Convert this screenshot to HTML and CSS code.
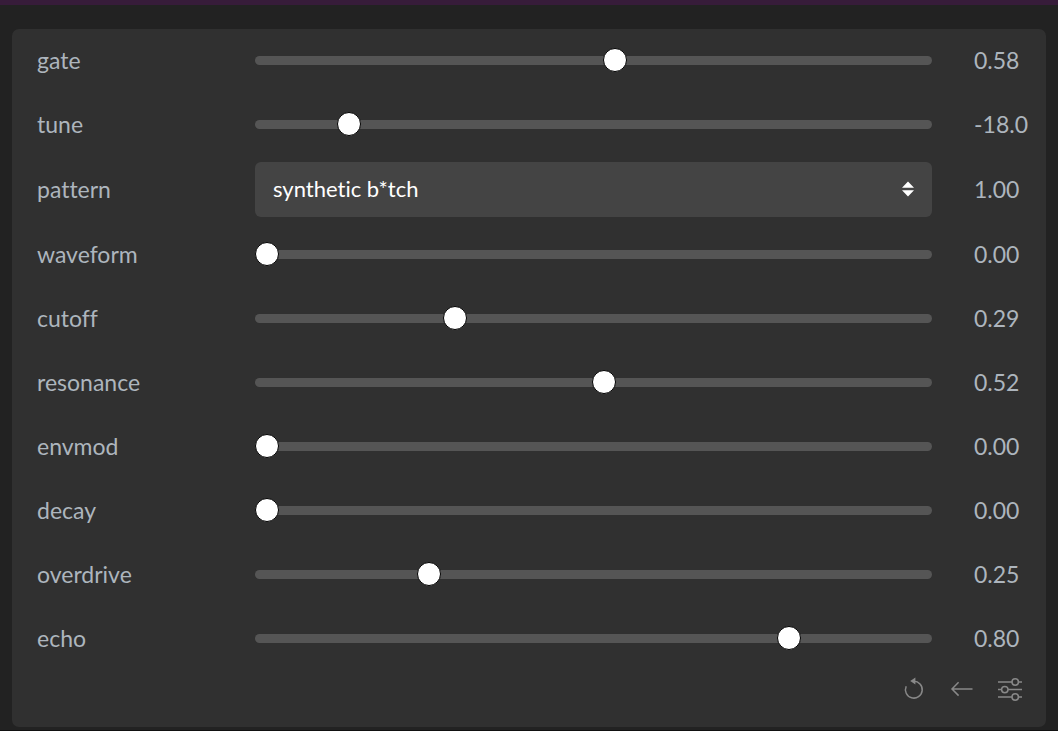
FILE: index.html
```html
<!DOCTYPE html>
<html lang="en">
<head>
  <meta charset="UTF-8"/><meta name="viewport" content="width=device-width, initial-scale=1.0"/>
  <title>synth</title>
  <link rel="stylesheet" href="styles.css">
</head>
<body>
  <main>
    <form class="panel">
      <div class="row">
        <label for="gate">gate</label>
        <input type="range" id="gate" min="0.1" max="1" step="0.01" value="0.58"/>
        <output for="gate">0.58</output>
      </div>
      <div class="row">
        <label for="tune">tune</label>
        <input type="range" id="tune" min="-24" max="24" step="0.1" value="-18"/>
        <output for="tune">-18.0</output>
      </div>
      <div class="row row-select">
        <label for="pattern">pattern</label>
        <div class="select-wrap">
          <select id="pattern">
            <option selected>synthetic b*tch</option>
          </select>
          <svg class="caret" viewBox="0 0 12 16" aria-hidden="true"><path d="M6 0.5 12 6.8H0zM6 15.5 12 9.2H0z"/></svg>
        </div>
        <output for="pattern">1.00</output>
      </div>
      <div class="row">
        <label for="waveform">waveform</label>
        <input type="range" id="waveform" min="0" max="1" step="0.01" value="0"/>
        <output for="waveform">0.00</output>
      </div>
      <div class="row">
        <label for="cutoff">cutoff</label>
        <input type="range" id="cutoff" min="0" max="1" step="0.001" value="0.288"/>
        <output for="cutoff">0.29</output>
      </div>
      <div class="row">
        <label for="resonance">resonance</label>
        <input type="range" id="resonance" min="0" max="1" step="0.001" value="0.516"/>
        <output for="resonance">0.52</output>
      </div>
      <div class="row">
        <label for="envmod">envmod</label>
        <input type="range" id="envmod" min="0" max="1" step="0.01" value="0"/>
        <output for="envmod">0.00</output>
      </div>
      <div class="row">
        <label for="decay">decay</label>
        <input type="range" id="decay" min="0" max="1" step="0.01" value="0"/>
        <output for="decay">0.00</output>
      </div>
      <div class="row">
        <label for="overdrive">overdrive</label>
        <input type="range" id="overdrive" min="0" max="1" step="0.001" value="0.248"/>
        <output for="overdrive">0.25</output>
      </div>
      <div class="row">
        <label for="echo">echo</label>
        <input type="range" id="echo" min="0" max="1" step="0.01" value="0.8"/>
        <output for="echo">0.80</output>
      </div>
      <div class="tools">
        <button type="reset" aria-label="Reset">
          <svg viewBox="0 0 24 24"><path d="M4.2 9.2A8.4 8.4 0 1 0 11.5 4.3"/><path class="fill" d="M13.4 0.4V7.6L8.2 4z"/></svg>
        </button>
        <button type="button" aria-label="Back">
          <svg viewBox="0 0 24 24"><path d="M22.5 12H2.2M8.6 5.2 2 12l6.6 6.6"/></svg>
        </button>
        <button type="button" aria-label="Settings">
          <svg viewBox="0 0 24 24"><path d="M0 5H14M20.5 5H24M0 12.6H3.5M10 12.6H24M0 20H14M20.5 20H24"/><circle cx="17.2" cy="5" r="3.2"/><circle cx="6.8" cy="12.6" r="3.2"/><circle cx="17.2" cy="20" r="3.2"/></svg>
        </button>
      </div>
    </form>
  </main>
</body>
</html>
```

FILE: styles.css
```css
*{box-sizing:border-box;}
body{margin:0;background:#111;color:#adb5bd;font-family:Lato,sans-serif;font-size:23px;line-height:32px;font-variant-ligatures:none;}
main{background:#222;border-top:5px solid #371c3a;padding:24px 12px 3px;}
.panel{display:flex;flex-direction:column;gap:2px;background:#303030;border-radius:7px;padding:0 0 20px 25px;}
.row{display:flex;align-items:center;height:62px;}
.row-select{height:64px;}
.row label{width:218px;flex:none;}
.row output{width:72px;margin-left:42px;flex:none;}
input[type=range]{flex:1;min-width:0;height:24px;margin:0;background:transparent;-webkit-appearance:none;appearance:none;}
input[type=range]::-webkit-slider-runnable-track{height:9px;border-radius:5px;background:#555;}
input[type=range]::-webkit-slider-thumb{-webkit-appearance:none;width:24px;height:24px;margin-top:-8px;border:1px solid #000;border-radius:50%;background:#fff;}
input[type=range]::-moz-range-track{height:9px;border-radius:5px;background:#555;}
input[type=range]::-moz-range-thumb{width:24px;height:24px;border:1px solid #000;border-radius:50%;background:#fff;}
.select-wrap{position:relative;flex:1;min-width:0;}
select{display:block;width:100%;height:55px;padding:0 48px 0 18px;border:0;border-radius:6px;background:#444;color:#fff;font:inherit;font-size:22px;font-variant-ligatures:none;-webkit-appearance:none;appearance:none;}
.caret{position:absolute;right:18px;top:19px;width:12px;height:16px;fill:#fff;pointer-events:none;}
.tools{display:flex;justify-content:flex-end;align-items:center;gap:24px;height:36px;padding-right:24px;}
.tools button{width:24px;height:24px;padding:0;border:0;background:none;color:#888;cursor:pointer;}
.tools svg{display:block;width:24px;height:24px;fill:none;stroke:currentColor;stroke-width:1.5;}
.tools .fill{fill:currentColor;stroke:none;}
```
